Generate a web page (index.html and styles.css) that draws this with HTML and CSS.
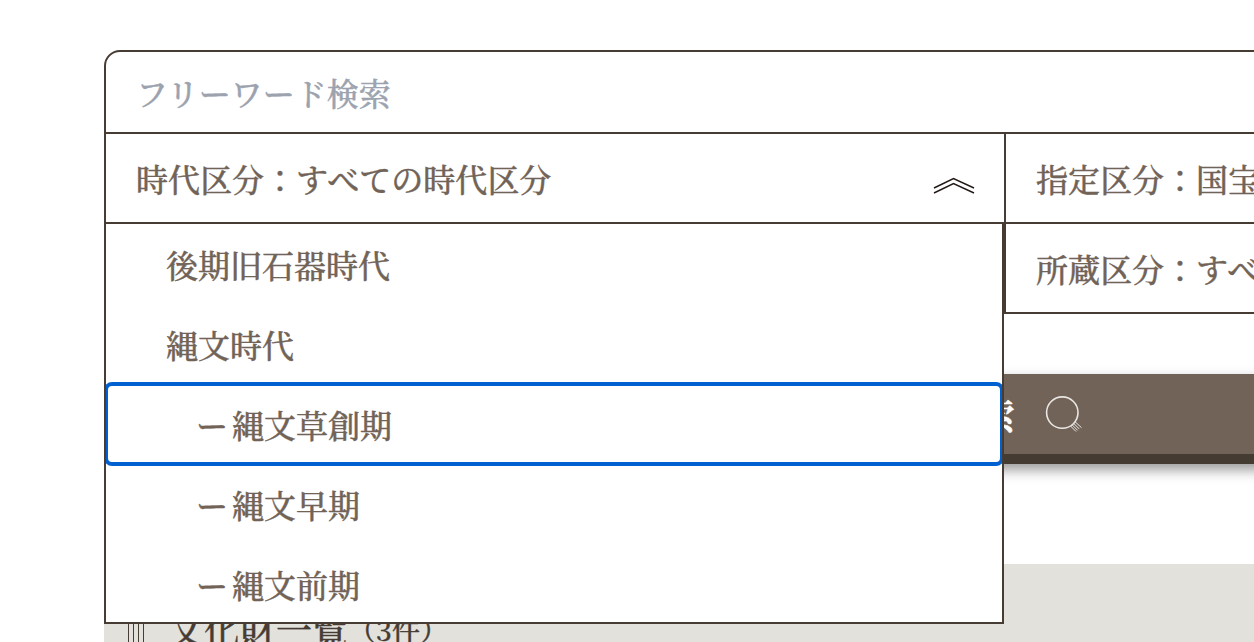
FILE: index.html
```html
<!DOCTYPE html>
<html lang="ja">
<head>
    <meta charset="UTF-8">
    <meta name="viewport" content="width=device-width, initial-scale=1.0">
    <title>文化財一覧</title>
    <link rel="stylesheet" href="styles.css">
</head>
<body>
    <main class="container">
        <form class="search">
            <input class="keyword" type="text" placeholder="フリーワード検索">
            <div class="filters">
                <div class="filter filter-era">
                    <span>時代区分：すべての時代区分</span>
                    <svg class="arrow" width="42" height="18" viewBox="0 0 42 18">
                        <path d="M1 11 L20.5 1.5 L41 11 M1 16 L20.5 6.5 L41 16" fill="none" stroke="#231815" stroke-width="1.4"/>
                    </svg>
                    <ul class="options">
                        <li class="option">後期旧石器時代</li>
                        <li class="option">縄文時代</li>
                        <li class="option sub focused"><span class="dash">ー</span>縄文草創期</li>
                        <li class="option sub"><span class="dash">ー</span>縄文早期</li>
                        <li class="option sub"><span class="dash">ー</span>縄文前期</li>
                    </ul>
                </div>
                <div class="filter filter-right">指定区分：国宝</div>
                <div class="filter filter-right filter-owner">所蔵区分：すべて</div>
            </div>
            <button class="submit" type="button">
                <span>検索</span>
                <svg width="38" height="38" viewBox="0 0 38 38" fill="none" stroke="#e9e6e3">
                    <circle cx="17.3" cy="16.6" r="15.7" stroke-width="1.6"/>
                    <path d="M25.5 30 L31 35.5 M27.2 28.9 L32.7 34.4 M28.7 27.4 L34.2 32.9 M30 25.7 L36.5 31.7" stroke-width="1"/>
                </svg>
            </button>
        </form>
        <section class="results">
            <h2 class="results-title">
                <span class="bars"></span>
                文化財一覧<span class="count">（3件）</span>
            </h2>
        </section>
    </main>
</body>
</html>
```
FILE: styles.css
```css
* {
    box-sizing: border-box;
}
body {
    margin: 0;
    overflow: hidden;
    background-color: #fff;
    color: #716357;
    font-family: "Noto Serif CJK JP", "Noto Serif JP", "Noto Sans CJK JP", serif;
    font-size: 32px;
    font-weight: 500;
    line-height: 48px;
    -webkit-text-stroke: 0.4px currentColor;
}
.container {
    width: 1802px;
    margin-left: 104px;
    padding-top: 50px;
}
.search {
    height: 514px;
}
.keyword {
    display: block;
    width: 100%;
    height: 84px;
    padding: 0 30px;
    border: 2px solid #463c34;
    border-radius: 16px 16px 0 0;
    font: inherit;
    outline: none;
}
.keyword::placeholder {
    color: #9ca3af;
    opacity: 1;
    -webkit-text-stroke: 0.4px #9ca3af;
}
.filters {
    display: grid;
    grid-template-columns: 900px 902px;
    grid-template-rows: 90px 90px;
}
.filter {
    display: flex;
    align-items: center;
    white-space: nowrap;
    border-bottom: 2px solid #463c34;
    padding: 0 30px;
}
.filter-era {
    position: relative;
    justify-content: space-between;
    border-left: 2px solid #463c34;
}
.filter-right {
    border-left: 2px solid #463c34;
    border-right: 2px solid #463c34;
}
.filter-owner {
    grid-column: 2;
}
.arrow {
    margin-top: 15px;
    margin-right: -1px;
}
.options {
    position: absolute;
    top: 88px;
    left: -2px;
    z-index: 1;
    width: 900px;
    height: 402px;
    margin: 0;
    padding: 0;
    overflow: hidden;
    list-style: none;
    background-color: #fff;
    border: 2px solid #463c34;
}
.option {
    display: flex;
    align-items: center;
    height: 80px;
    padding: 0 60px;
}
.sub {
    padding-left: 90px;
}
.dash {
    width: 36px;
}
.focused {
    outline: 4px solid #0060cf;
    outline-offset: -2px;
    border-radius: 6px;
}
.submit {
    display: flex;
    align-items: center;
    justify-content: center;
    gap: 30px;
    width: 720px;
    height: 90px;
    margin: 60px auto 0;
    padding: 2px 0 0 16px;
    color: #fff;
    background-color: #716357;
    border: 0;
    border-bottom: 10px solid #443c32;
    box-shadow: 0 6px 12px rgba(0, 0, 0, 0.4);
    font: inherit;
    font-size: 36px;
    font-weight: 700;
}
.results {
    padding: 37px 22px 0;
    background-color: #e2e1dc;
}
.results-title {
    display: flex;
    align-items: center;
    margin: 0;
    height: 56px;
    color: #463c34;
    font-size: 36px;
    font-weight: 500;
}
/* four thin vertical rules in front of the heading */
.bars {
    width: 17px;
    height: 28px;
    margin: 0 23px 0 2px;
    background: repeating-linear-gradient(90deg, #463c34 0 1px, transparent 1px 5px);
}
.count {
    font-size: 28px;
}
```
